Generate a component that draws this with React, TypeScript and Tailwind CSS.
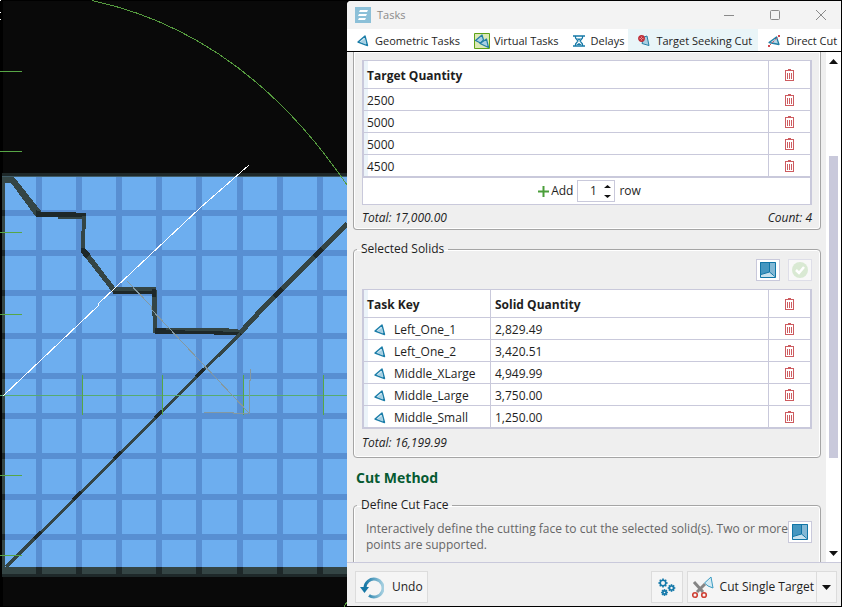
import type { ReactNode } from 'react';
import { clsx } from 'clsx';

const TARGETS = ['2500', '5000', '5000', '4500'];

const SOLIDS = [
  { key: 'Left_One_1', quantity: '2,829.49' },
  { key: 'Left_One_2', quantity: '3,420.51' },
  { key: 'Middle_XLarge', quantity: '4,949.99' },
  { key: 'Middle_Large', quantity: '3,750.00' },
  { key: 'Middle_Small', quantity: '1,250.00' },
];

const COLUMNS = [36, 76, 116, 156, 196, 237, 277, 317];
const ROWS = [210, 250, 290, 333, 373, 413, 453, 494, 534];

function Viewport() {
  return (
    <svg
      className="h-full w-full bg-[#090909]"
      viewBox="0 0 347 607"
      preserveAspectRatio="xMinYMin slice"
      shapeRendering="crispEdges"
      fill="none"
      role="img"
      aria-label="Pit design view"
    >
      <path d="M0 0h347v1H0zM0 606h347v1H0zM0 0h3v607H0z" fill="#000" />
      <path d="M0 0h1v1H0zM0 12h1v1H0zM0 19h1v1H0z" fill="#fff" />
      <rect x="2" y="173" width="345" height="404" fill="#1e2829" />
      <rect x="2" y="177" width="345" height="397" fill="#344545" />
      <rect x="5" y="177" width="342" height="390" fill="#6daeef" />
      <rect x="2" y="176" width="345" height="1" fill="#3f5b66" />
      {COLUMNS.map(x => (
        <g key={x}>
          <rect x={x} y="177" width="6" height="390" fill="#588fd2" />
          <rect x={x} y="567" width="6" height="7" fill="#1e2829" />
        </g>
      ))}
      {ROWS.map(y => (
        <g key={y}>
          <rect x="5" y={y} width="342" height="6" fill="#588fd2" />
          <rect x="2" y={y} width="3" height="6" fill="#1e2829" />
        </g>
      ))}

      {/* Solid boundaries */}
      <path d="M5 177h9l27 34v6h-5L11 183H5z" fill="#344545" />
      <path d="M36 210l5 2h25l20 1v5l-28-1-22 0z" fill="#1e2829" />
      <path d="M58 217h24v2H58z" fill="#344545" />
      <path d="M82 216h4v12l-1 1v19l32 42-4 3-32-41v-20l1-2z" fill="#344545" />
      <path d="M85 248l5 6-4 5-5-7v-4z" fill="#1e2829" />
      <path d="M113 287h43v4h-43z" fill="#344545" />
      <path d="M113 291h43v3h-43z" fill="#1e2829" />
      <path d="M152 290h5v37l1 6h-5l-1-36z" fill="#344545" />
      <path d="M152 289h4v8h-4zM155 328h11l75 2 1 5h-28l-1-1h-58z" fill="#1e2829" />
      <path d="M166 328h59l17 2v2l-76-2z" fill="#344545" />
      <path d="M6 567L240 334" stroke="#344545" strokeWidth="3" />
      <path d="M240 333L263 308L347 224" stroke="#344545" strokeWidth="5" />
      <path
        d="M34 539L41 532M73 500L81 492M114 459L121 452M155 418L162 411M196 377L204 369"
        stroke="#1e2829"
        strokeWidth="3"
      />
      <path d="M274 297L282 289M314 257L322 249" stroke="#1e2829" strokeWidth="5" />

      {/* Gridline ticks */}
      <path d="M0 71.5h22M0 151.5h22M0 232.5h22M0 314.5h22M0 475.5h22M0 555.5h22" stroke="#57a646" />
      <path d="M0 395.5h347" stroke="#57ab70" />
      <path d="M82.5 375v40M162.5 375v40M243.5 375v40M323.5 375v40" stroke="#57a646" />

      <path d="M92 0.5C220 28 300 116 347 185" stroke="#559b3e" />
      <path d="M3 396L98 306L98 304L200 208L249 165" stroke="#fff" />
      <path d="M127 281L151 306L151 309L249 413V380h1V369M248 413H233V412H204" stroke="#8498a0" />
      <path d="M347 602l-3 5" stroke="#559b3e" />
    </svg>
  );
}

function SolidIcon() {
  return (
    <svg className="size-3" viewBox="0 0 12 12" fill="none" aria-hidden="true">
      <path d="M1 7L8 1L10.5 10.5Z" fill="#d3eaf4" stroke="#1b7da8" strokeWidth="1.4" strokeLinejoin="round" />
      <path d="M3 7L8 4L9 9.5Z" fill="#a5cfe2" />
    </svg>
  );
}

function VirtualIcon() {
  return (
    <svg className="size-4" viewBox="0 0 16 16" aria-hidden="true">
      <path d="M.5.5h15v15H.5z" fill="#dbe9b5" stroke="#5fa317" />
      <g fill="#a9d0e3" stroke="#237fa5" strokeWidth="1.2" strokeLinejoin="round">
        <path d="M1.5 7.5L8 2l1.5 5-3 3z" />
        <path d="M6 10.5L12.5 6L14.5 14.5z" />
      </g>
    </svg>
  );
}

function DelayIcon() {
  return (
    <svg className="size-3" viewBox="0 0 12 12" fill="none" stroke="#1478a6" aria-hidden="true">
      <path d="M0 1h12M0 11h12" strokeWidth="1.6" />
      <path d="M2.5 1v2L5 6L2.5 9v2M9.5 1v2L7 6L9.5 9v2" strokeWidth="1.2" />
      <path d="M3.5 3.5h5L6 5.5zM3 10l3-2 3 2z" fill="#1478a6" stroke="none" />
    </svg>
  );
}

function SeekIcon() {
  return (
    <svg className="size-3" viewBox="0 0 12 12" fill="none" aria-hidden="true">
      <path d="M6 2L9 1L11 10.5L4 8.5z" fill="#a9d0e3" stroke="#237fa5" strokeLinejoin="round" />
      <circle cx="3.5" cy="3.5" r="2.7" fill="#e58d92" stroke="#bd2a34" strokeWidth="1.4" />
      <path d="M2 2l3 3M5 2L2 5" stroke="#bd2a34" />
    </svg>
  );
}

function DirectIcon() {
  return (
    <svg className="size-3" viewBox="0 0 12 12" fill="none" aria-hidden="true">
      <path d="M1 7.5L8.5 2L11 9.5z" fill="#b5d8e8" stroke="#237fa5" strokeWidth="1.3" strokeLinejoin="round" />
      <path d="M1 11L11 1" stroke="#d35a60" strokeDasharray="3 1.5" />
      <path d="M0 10h2v2H0zM10 0h2v2h-2z" fill="#cf4950" />
    </svg>
  );
}

function TrashIcon() {
  return (
    <svg className="block h-3 w-[9px]" viewBox="0 0 9 12" fill="none" stroke="#cd5c60" shapeRendering="crispEdges" aria-hidden="true">
      <path d="M0 1.5h9M3 .5h3M.5 2v9.5h8V2M2.5 4v6M4.5 4v6M6.5 4v6" />
    </svg>
  );
}

function FaceIcon() {
  return (
    <svg className="size-4" viewBox="0 0 16 16" aria-hidden="true">
      <path d="M0 0h16v16H0z" fill="#4496c0" />
      <path d="M10 0h6v14l-6-4z" fill="#83b8d5" />
      <path d="M0 12.5L10 10l6 4v2H0z" fill="#c6e1ee" />
      <path d="M.5.5h15v15H.5zM9.5 0v10L1 12.5M9.5 10l5.5 4.5" fill="none" stroke="#1175a6" />
    </svg>
  );
}

function GearsIcon() {
  const gears = [
    { x: 6, y: 6, r: 2.8 },
    { x: 14.5, y: 11, r: 2 },
    { x: 7.5, y: 15.5, r: 1.6 },
  ];
  return (
    <svg className="size-5" viewBox="0 0 20 20" fill="none" stroke="#1579aa" aria-hidden="true">
      {gears.map(g => (
        <g key={g.x} strokeWidth="1.6">
          <circle cx={g.x} cy={g.y} r={g.r} />
          {[0, 45, 90, 135, 180, 225, 270, 315].map(a => (
            <path key={a} d={`M${g.x} ${g.y - g.r}v-1.8`} transform={`rotate(${a} ${g.x} ${g.y})`} />
          ))}
        </g>
      ))}
    </svg>
  );
}

function ScissorsIcon() {
  return (
    <svg className="h-6 w-[22px] shrink-0" viewBox="0 0 22 24" fill="none" aria-hidden="true">
      <path d="M12.5 8L19 2l2 11-5-2z" fill="#d5ebf4" stroke="#3b9cc2" />
      <path d="M2 7l9 10M13 9L5 17" stroke="#858585" strokeWidth="3" />
      <circle cx="3" cy="20" r="2.3" stroke="#cf4034" strokeWidth="1.6" />
      <circle cx="12" cy="20" r="2.3" stroke="#cf4034" strokeWidth="1.6" />
    </svg>
  );
}

function UndoIcon() {
  return (
    <svg className="size-6" viewBox="0 0 24 24" fill="none" aria-hidden="true">
      <defs>
        <linearGradient id="undo" x1="0" x2="1">
          <stop stopColor="#1677a5" />
          <stop offset="1" stopColor="#a5cfe0" />
        </linearGradient>
      </defs>
      <path d="M5 13A9 9 0 1 1 9 20.5" stroke="url(#undo)" strokeWidth="3" />
      <path d="M0 12h9l-4.5 6z" fill="#1677a5" />
    </svg>
  );
}

function Arrow({ up = false, className = 'h-[5px] w-[9px]' }: { up?: boolean; className?: string }) {
  return (
    <svg className={className} viewBox="0 0 10 5" preserveAspectRatio="none" aria-hidden="true">
      <path d={up ? 'M0 5L5 0l5 5z' : 'M0 0h10L5 5z'} fill="#111" />
    </svg>
  );
}

function Tab({ icon, label, active, className = 'gap-1.5 pr-1' }: { icon: ReactNode; label: string; active?: boolean; className?: string }) {
  return (
    <button
      type="button"
      role="tab"
      aria-selected={!!active}
      className={clsx('flex h-full shrink-0 items-center whitespace-nowrap pl-2.5 pt-0.5', className, active && 'bg-[#e9f5f8]')}
    >
      {icon}
      {label}
    </button>
  );
}

function Group({ legend, className, children }: { legend?: string; className?: string; children: ReactNode }) {
  return (
    <fieldset className={clsx('min-w-0 rounded-[4px] border border-[#a5a5a5] px-2 shadow-[inset_0_0_0_1px_#fff]', className)}>
      {legend && <legend className="-ml-[5px] px-1 leading-4">{legend}</legend>}
      {children}
    </fieldset>
  );
}

function DeleteCell({ head = false, label }: { head?: boolean; label: string }) {
  const Cell = head ? 'th' : 'td';
  return (
    <Cell className="border-b border-l border-[#c9c9db] p-0">
      <button type="button" aria-label={label} className="mx-auto block">
        <TrashIcon />
      </button>
    </Cell>
  );
}

const frameClass = 'border-x-2 border-y border-[#c9c9db] bg-white';
const tableClass = 'w-full table-fixed border-separate border-spacing-0 text-left';
const firstCell = 'border-b border-[#c9c9db] pb-0 pt-0.5 shadow-[inset_4px_0_0_#ebf3f9]';
const midCell = 'border-b border-l border-[#c9c9db] pb-0 pt-0.5 pl-1';

function SquareButton({ label, disabled, children }: { label: string; disabled?: boolean; children: ReactNode }) {
  return (
    <button
      type="button"
      aria-label={label}
      disabled={disabled}
      className="flex h-[22px] w-6 shrink-0 items-center justify-center border border-[#c9c9db] bg-white disabled:border-[#dedee8] disabled:bg-[#f8f8f8]"
    >
      {children}
    </button>
  );
}

function TargetTable() {
  return (
    <>
      <div className={frameClass}>
        <table className={tableClass}>
          <colgroup>
            <col />
            <col className="w-[42px]" />
          </colgroup>
          <thead>
            <tr className="h-[28px]">
              <th className={clsx(firstCell, 'pl-[3px]')}>Target Quantity</th>
              <DeleteCell head label="Delete all targets" />
            </tr>
          </thead>
          <tbody>
            {TARGETS.map((quantity, i) => (
              <tr key={i} className="h-[22px]">
                <td className={clsx(firstCell, 'pl-[3px]')}>{quantity}</td>
                <DeleteCell label="Delete target" />
              </tr>
            ))}
          </tbody>
        </table>
      </div>
      <div className="flex h-[27px] items-center justify-center border-b border-l border-r-2 border-[#c9c9db] bg-white pl-1.5">
        <button type="button" className="flex items-center gap-0.5">
          <svg className="size-[11px]" viewBox="0 0 11 11" aria-hidden="true">
            <path d="M5.5 0v11M0 5.5h11" stroke="#4b9e3a" strokeWidth="2" />
          </svg>
          Add
        </button>
        <div className="ml-1 flex h-[22px] w-[38px] items-center border border-[#c9c9db]">
          <input aria-label="Row count" defaultValue="1" className="w-[26px] min-w-0 bg-transparent pl-1 text-center outline-none" />
          <span className="flex flex-col gap-[7px]">
            <Arrow up className="h-[3px] w-[7px]" />
            <Arrow className="h-[3px] w-[7px]" />
          </span>
        </div>
        <span className="ml-1">row</span>
      </div>
    </>
  );
}

function SolidTable() {
  return (
    <div className={frameClass}>
      <table className={tableClass}>
        <colgroup>
          <col className="w-[126px]" />
          <col />
          <col className="w-[42px]" />
        </colgroup>
        <thead>
          <tr className="h-[28px]">
            <th className={clsx(firstCell, 'pl-[3px]')}>Task Key</th>
            <th className={midCell}>Solid Quantity</th>
            <DeleteCell head label="Delete all solids" />
          </tr>
        </thead>
        <tbody>
          {SOLIDS.map(solid => (
            <tr key={solid.key} className="h-[22px]">
              <td className={clsx(firstCell, 'pl-2.5')}>
                <span className="flex items-center gap-2">
                  <SolidIcon />
                  {solid.key}
                </span>
              </td>
              <td className={midCell}>{solid.quantity}</td>
              <DeleteCell label={`Delete ${solid.key}`} />
            </tr>
          ))}
        </tbody>
      </table>
    </div>
  );
}

export default function App() {
  return (
    <main className="flex h-screen overflow-hidden bg-black font-['Open_Sans','Noto_Sans',sans-serif] text-[12px] leading-4 text-[#1e1e1e]">
      <div className="w-[347px] shrink-0">
        <Viewport />
      </div>
      <section className="my-px mr-px flex min-w-0 flex-1 flex-col overflow-hidden rounded-tl-[4px] bg-[#efefef]">
        <header className="flex h-7 shrink-0 items-center bg-[#f3f3f3] pl-2 text-[#8a8a8a]">
          <svg className="size-4" viewBox="0 0 16 16" aria-hidden="true">
            <path d="M0 0h16v16H0z" fill="#8cc0d8" />
            <path d="M5 3h8l-1 2H4zM4 7h8l-1 2H3zM4 11h7l-1 2H3z" fill="#fff" />
          </svg>
          <h1 className="ml-1.5 flex-1 text-[11px]">Tasks</h1>
          <div className="flex items-center gap-9 pr-[15px]">
            <button type="button" aria-label="Minimize">
              <svg className="size-[10px]" viewBox="0 0 10 10" stroke="#8a8a8a">
                <path d="M0 5.5h10" />
              </svg>
            </button>
            <button type="button" aria-label="Maximize">
              <svg className="size-[10px]" viewBox="0 0 10 10" stroke="#8a8a8a" fill="none">
                <rect x=".5" y=".5" width="9" height="9" rx="1" />
              </svg>
            </button>
            <button type="button" aria-label="Close">
              <svg className="size-[10px]" viewBox="0 0 10 10" stroke="#8a8a8a">
                <path d="M0 0l10 10M10 0L0 10" />
              </svg>
            </button>
          </div>
        </header>

        <nav role="tablist" className="flex h-[23px] shrink-0 items-center overflow-hidden border-b border-black bg-white text-[11px]">
          <Tab icon={<SolidIcon />} label="Geometric Tasks" />
          <Tab icon={<VirtualIcon />} label="Virtual Tasks" className="gap-1 pr-1" />
          <Tab icon={<DelayIcon />} label="Delays" />
          <Tab icon={<SeekIcon />} label="Target Seeking Cut" active className="gap-1.5 pr-1.5" />
          <Tab icon={<DirectIcon />} label="Direct Cut" className="gap-1.5" />
        </nav>

        <div className="flex min-h-0 flex-1">
          <div className="min-w-0 flex-1 overflow-hidden pl-1.5 pr-[5px]">
            <Group className="rounded-t-none border-t-0 pb-[3px] pt-2">
              <TargetTable />
              <p className="flex justify-between pt-[5px] italic">
                <span>Total: 17,000.00</span>
                <span>Count: 4</span>
              </p>
            </Group>

            <Group legend="Selected Solids" className="mt-[11px] pb-1.5">
              <div className="mb-2 flex justify-end gap-2 pt-0.5">
                <SquareButton label="Pick solids">
                  <FaceIcon />
                </SquareButton>
                <SquareButton label="Confirm" disabled>
                  <svg className="size-4" viewBox="0 0 16 16" fill="none">
                    <circle cx="8" cy="8" r="8" fill="#d9e9d3" />
                    <path d="M4 8l3 3 5-6" stroke="#fff" strokeWidth="2.5" />
                  </svg>
                </SquareButton>
              </div>
              <SolidTable />
              <p className="pt-1.5 italic">Total: 16,199.99</p>
            </Group>

            <h2 className="ml-[3px] mt-2.5 text-[14px] font-bold leading-5 text-[#065a32]">Cut Method</h2>

            <Group legend="Define Cut Face" className="mt-[9px] pb-8">
              <div className="flex items-start justify-between pl-1 pt-2 text-[#666]">
                <p>Interactively define the cutting face to cut the selected solid(s). Two or more points are supported.</p>
                <SquareButton label="Define cut face">
                  <FaceIcon />
                </SquareButton>
              </div>
            </Group>
          </div>
          <div className="flex w-[15px] shrink-0 flex-col items-center bg-white pb-1.5 pt-[7px]">
            <Arrow up />
            <div className="mt-[92px] h-[302px] w-[9px] bg-[#c9c9db]" />
            <Arrow className="mt-auto h-[5px] w-[9px]" />
          </div>
        </div>

        <footer className="flex h-[44px] shrink-0 items-start border-t border-[#c9c9db] pl-2 pr-1 pt-2">
          <button type="button" className="flex h-8 items-center gap-2 border border-[#dcdcdc] bg-[#f5f5f5] px-1">
            <UndoIcon />
            Undo
          </button>
          <button type="button" aria-label="Settings" className="ml-auto flex h-8 w-8 items-center justify-center border border-[#dcdcdc] bg-[#f5f5f5]">
            <GearsIcon />
          </button>
          <div className="ml-1 flex h-8 border border-[#dcdcdc] bg-[#f5f5f5]">
            <button type="button" className="flex items-center gap-1.5 pl-1 pr-0.5">
              <ScissorsIcon />
              Cut Single Target
            </button>
            <button type="button" aria-label="More cut options" className="border-l border-[#dcdcdc] px-[5px]">
              <Arrow />
            </button>
          </div>
        </footer>
      </section>
    </main>
  );
}
